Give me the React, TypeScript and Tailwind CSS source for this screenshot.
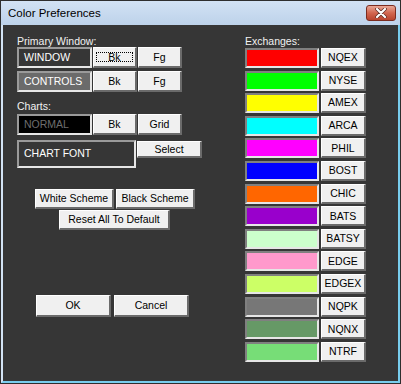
import type { ReactNode } from "react";

const exchanges = [
  { name: "NQEX", color: "#ff0000" },
  { name: "NYSE", color: "#00ff00" },
  { name: "AMEX", color: "#ffff00" },
  { name: "ARCA", color: "#00ffff" },
  { name: "PHIL", color: "#ff00ff" },
  { name: "BOST", color: "#0000ff" },
  { name: "CHIC", color: "#ff6600" },
  { name: "BATS", color: "#9900cc" },
  { name: "BATSY", color: "#ccffcc" },
  { name: "EDGE", color: "#ff99cc" },
  { name: "EDGEX", color: "#ccff66" },
  { name: "NQPK", color: "#777777" },
  { name: "NQNX", color: "#669966" },
  { name: "NTRF", color: "#77dd77" },
];

function Btn({
  children,
  className = "",
  focused = false,
}: {
  children: ReactNode;
  className?: string;
  focused?: boolean;
}) {
  return (
    <button
      type="button"
      className={`flex shrink-0 items-center justify-center whitespace-nowrap border-t border-l border-r-2 border-b-2 border-t-white border-l-white border-r-[#6b6b6b] border-b-[#6b6b6b] bg-[#f0f0f0] text-[10.5px] leading-none text-black ${
        focused ? "px-[2px] py-[4px]" : ""
      } ${className}`}
    >
      <span
        className={`flex h-full w-full items-center justify-center ${
          focused ? "border border-dotted border-black" : ""
        }`}
      >
        {children}
      </span>
    </button>
  );
}

function Box({ label, className = "" }: { label: string; className?: string }) {
  return (
    <div
      className={`flex h-[21px] w-[75px] shrink-0 items-center border-2 border-t-[#9a9a9a] border-l-[#9a9a9a] border-r-[#e6e6e6] border-b-[#e6e6e6] pl-[5px] text-[10.5px] ${className}`}
    >
      {label}
    </div>
  );
}

export default function App() {
  return (
    <div
      className="h-[384px] w-[401px] bg-[#2e2e2e] p-px"
      style={{ fontFamily: '"Liberation Sans", Arial, sans-serif' }}
    >
      <div className="flex h-full flex-col">
        {/* title bar */}
        <div className="flex h-[24px] items-start bg-gradient-to-b from-[#d2e2f4] to-[#bdd2ea] pl-[7px] pr-[4px]">
          <span className="mt-[6px] text-[11.5px] leading-[12px] text-black">Color Preferences</span>
          <div className="ml-auto mt-[4px] flex h-[16px] w-[30px] items-center justify-center rounded-[3px] border border-[#7b2c20] bg-gradient-to-b from-[#e8a796] via-[#d2664f] to-[#b8442e]">
            <svg width="12" height="10" viewBox="0 0 12 10">
              <path
                d="M2 1 L10 9 M10 1 L2 9"
                stroke="#5a2a22"
                strokeWidth="3.6"
                strokeLinecap="round"
              />
              <path
                d="M2 1 L10 9 M10 1 L2 9"
                stroke="#ffffff"
                strokeWidth="2.2"
                strokeLinecap="round"
              />
            </svg>
          </div>
        </div>

        {/* client area */}
        <div className="flex flex-1 border-l-2 border-r-2 border-b-2 border-l-[#d4e4f5] border-r-[#78cdee] border-b-[#78cdee] bg-[#363636] pl-[14px] text-[#f2f2f2]">
          {/* left column */}
          <div className="flex w-[186px] flex-col pt-[11px]">
            <div className="h-[11px] text-[10.5px] leading-[11px]">Primary Window:</div>
            <div className="flex gap-px">
              <Box label="WINDOW" className="bg-[#363636] text-white" />
              <Btn className="h-[21px] w-[44px]" focused>
                Bk
              </Btn>
              <Btn className="h-[21px] w-[44px]">Fg</Btn>
            </div>
            <div className="mt-[3px] flex gap-px">
              <Box label="CONTROLS" className="bg-[#6b6b6b] text-white" />
              <Btn className="h-[21px] w-[44px]">Bk</Btn>
              <Btn className="h-[21px] w-[44px]">Fg</Btn>
            </div>
            <div className="mt-[9px] h-[11px] text-[10.5px] leading-[11px]">Charts:</div>
            <div className="mt-[2px] flex gap-px">
              <Box label="NORMAL" className="bg-black text-[#6e6e6e]" />
              <Btn className="h-[21px] w-[44px]">Bk</Btn>
              <Btn className="h-[21px] w-[44px]">Grid</Btn>
            </div>
            <div className="mt-[5px] flex items-start gap-px">
              <div className="h-[28px] w-[119px] border-2 border-t-[#9a9a9a] border-l-[#9a9a9a] border-r-[#e6e6e6] border-b-[#e6e6e6] pl-[5px] pt-[5px] text-[10.5px] leading-[12px] text-white">
                CHART FONT
              </div>
              <Btn className="mt-px h-[17px] w-[65px]">Select</Btn>
            </div>
            <div className="ml-[18px] mt-[21px] flex gap-[2px]">
              <Btn className="h-[20px] w-[79px]">White Scheme</Btn>
              <Btn className="h-[20px] w-[79px]">Black Scheme</Btn>
            </div>
            <div className="ml-[42px] mt-px flex">
              <Btn className="h-[20px] w-[111px]">Reset All To Default</Btn>
            </div>
            <div className="ml-[19px] mt-[65px] flex gap-[3px]">
              <Btn className="h-[22px] w-[75px]">OK</Btn>
              <Btn className="h-[22px] w-[75px]">Cancel</Btn>
            </div>
          </div>

          {/* right column */}
          <div className="ml-[42px] flex flex-col pt-[11px]">
            <div className="h-[11px] text-[10.5px] leading-[11px]">Exchanges:</div>
            <div className="mt-px flex flex-col gap-[2.62px]">
              {exchanges.map((ex) => (
                <div key={ex.name} className="flex h-[20px] gap-[2px]">
                  <div
                    className="h-[20px] w-[74px] border-2 border-t-[#808080] border-l-[#808080] border-r-[#e6e6e6] border-b-[#e6e6e6]"
                    style={{ backgroundColor: ex.color }}
                  />
                  <Btn className="h-[20px] w-[45px]">{ex.name}</Btn>
                </div>
              ))}
            </div>
          </div>
        </div>
      </div>
    </div>
  );
}
